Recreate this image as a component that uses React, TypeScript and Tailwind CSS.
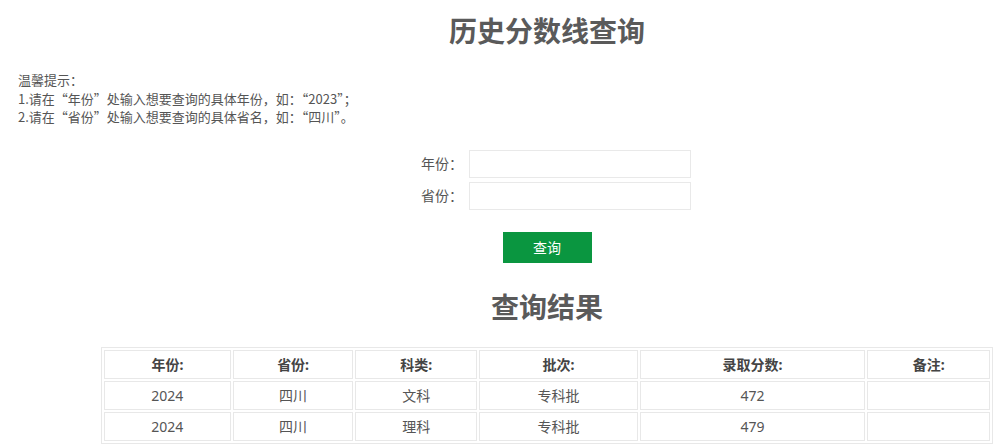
import React from "react";

const rows = [
  ["2024", "四川", "文科", "专科批", "472", ""],
  ["2024", "四川", "理科", "专科批", "479", ""],
];
const heads = ["年份:", "省份:", "科类:", "批次:", "录取分数:", "备注:"];
const widths = ["w-[127px]", "w-[121px]", "w-[122px]", "w-[159px]", "w-[226px]", "w-[123px]"];

export default function App() {
  return (
    <div
      className="w-[1000px] h-[448px] overflow-hidden bg-white text-[#555]"
      style={{ fontFamily: '"Noto Sans", "Noto Sans CJK SC", sans-serif' }}
    >
      <div className="ml-[101px] w-[892px] pt-[13px]">
        <h1 className="text-center text-[28px] leading-[36px] font-bold text-[#5a5a5a]">历史分数线查询</h1>
      </div>
      <div
        className="pl-[18px] pt-[22px] text-[13px] leading-[18.5px] text-[#555]"
        style={{ fontFamily: '"Noto Sans CJK SC", sans-serif' }}
      >
        <p>温馨提示：</p>
        <p>1.请在“年份”处输入想要查询的具体年份，如：“2023”；</p>
        <p>2.请在“省份”处输入想要查询的具体省名，如：“四川”。</p>
      </div>
      <div className="ml-[101px] w-[892px]">
        <div className="mt-[23px] flex flex-col items-center pl-[10px]">
          <div className="flex items-center gap-[6px]">
            <span className="w-[50px] whitespace-nowrap text-right text-[14px] leading-[28px]">年份：</span>
            <input className="h-[28px] w-[222px] border border-[#e9e9e9] outline-none" />
          </div>
          <div className="mt-[4px] flex items-center gap-[6px]">
            <span className="w-[50px] whitespace-nowrap text-right text-[14px] leading-[28px]">省份：</span>
            <input className="h-[28px] w-[222px] border border-[#e9e9e9] outline-none" />
          </div>
        </div>
        <div className="mt-[22px] flex justify-center">
          <button className="h-[31px] w-[89px] bg-[#0a9640] text-white text-[14px] leading-[31px]">查询</button>
        </div>
        <h2 className="mt-[24px] text-center text-[28px] leading-[40px] font-bold text-[#5a5a5a]">查询结果</h2>
        <table className="mt-[20px] w-[892px] border-separate border-spacing-[2px] border border-[#e8e8e8] text-[14px] text-center">
          <thead>
            <tr>
              {heads.map((h, i) => (
                <th key={i} className={`${widths[i]} h-[29px] border border-[#e8e8e8] font-bold text-[#444] p-0`}>{h}</th>
              ))}
            </tr>
          </thead>
          <tbody>
            {rows.map((r, ri) => (
              <tr key={ri}>
                {r.map((c, ci) => (
                  <td key={ci} className="h-[29px] border border-[#e8e8e8] text-[#555] p-0">{c}</td>
                ))}
              </tr>
            ))}
          </tbody>
        </table>
      </div>
    </div>
  );
}
